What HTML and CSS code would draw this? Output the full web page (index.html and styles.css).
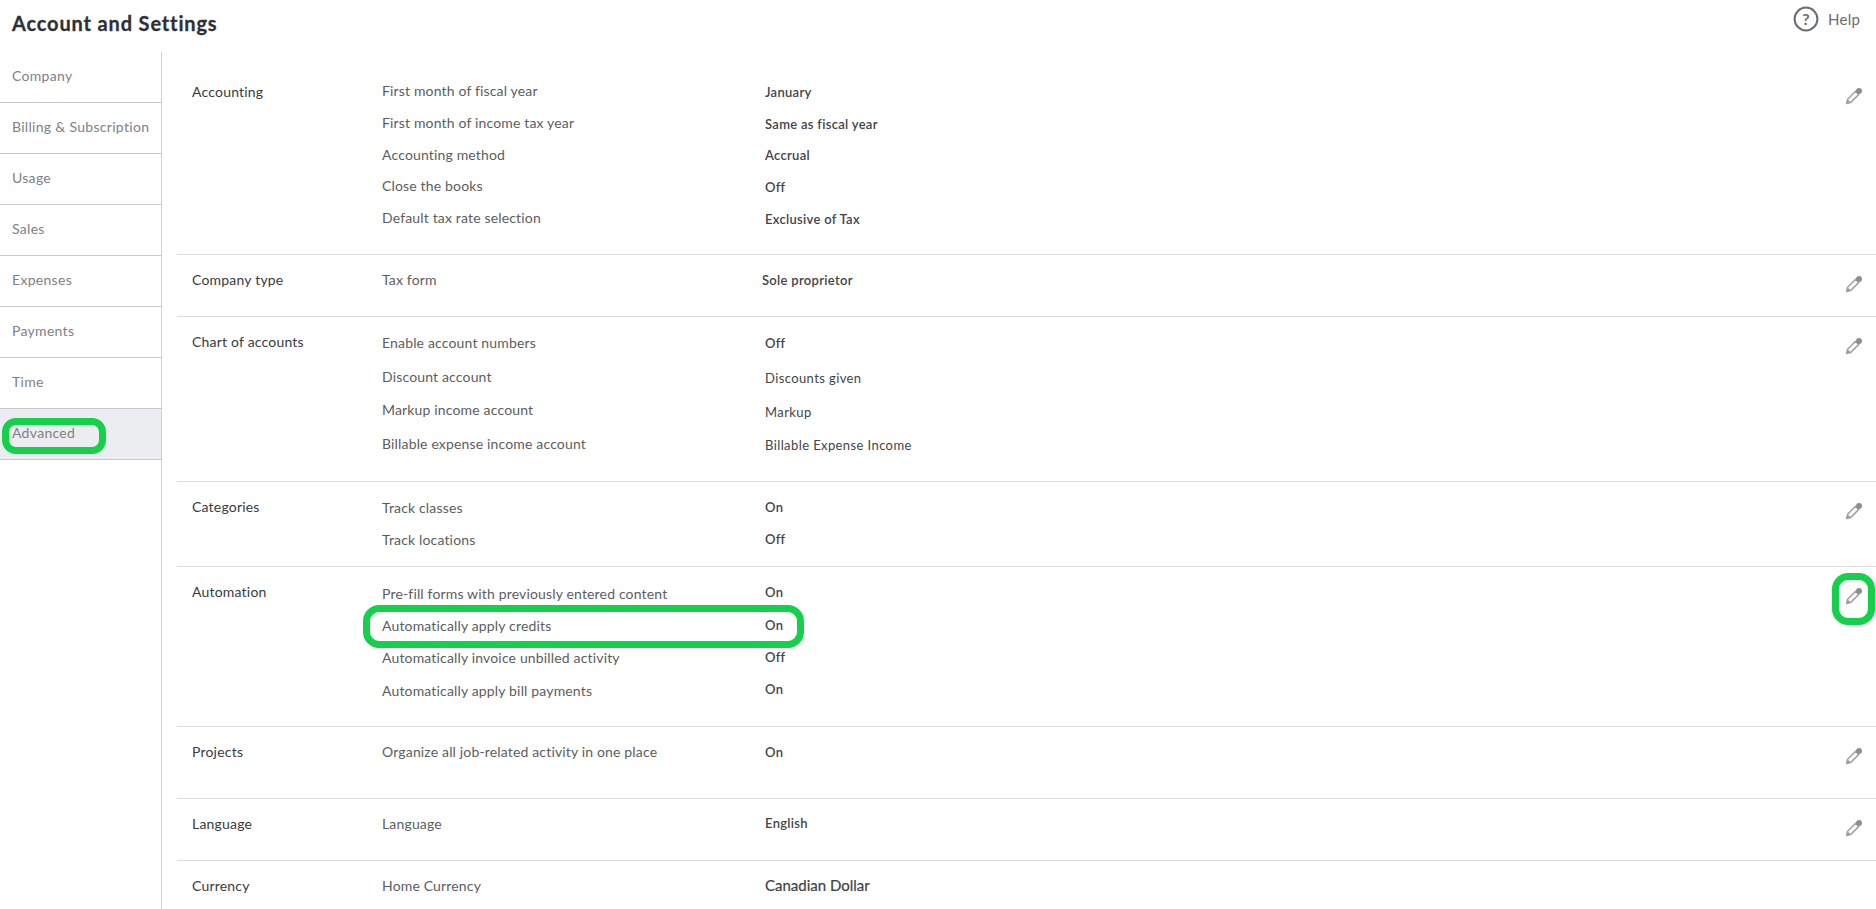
FILE: index.html
```html
<!DOCTYPE html>
<html lang="en">
<head>
<meta charset="utf-8">
<title>Account and Settings</title>
<link rel="stylesheet" href="styles.css">
</head>
<body>
<svg class="defs" width="0" height="0" aria-hidden="true">
  <symbol id="pencil" viewBox="0 0 18 18">
    <path d="M1.6 16.4l1-4.2L10.6 4.2l3.2 3.2L5.8 15.4z" fill="none" stroke="#a0a1a4" stroke-width="1.5" stroke-linejoin="round"/>
    <path d="M1.2 16.8l1.3-4.8 3.5 3.5z" fill="#a0a1a4"/>
    <circle cx="14" cy="4" r="3" fill="#8d8e91"/>
  </symbol>
</svg>
<header class="top">
  <h1 class="title">Account and Settings</h1>
  <div class="help">
    <svg class="help-icon" viewBox="0 0 26 26"><circle cx="13" cy="13" r="11.4" fill="none" stroke="#6b6c72" stroke-width="2"/><text x="13" y="18.5" text-anchor="middle" class="help-q">?</text></svg>
    <span>Help</span>
  </div>
</header>
<div class="layout">
  <nav class="side">
    <a class="side-item">Company</a>
    <a class="side-item">Billing &amp; Subscription</a>
    <a class="side-item">Usage</a>
    <a class="side-item">Sales</a>
    <a class="side-item">Expenses</a>
    <a class="side-item">Payments</a>
    <a class="side-item">Time</a>
    <a class="side-item is-active">Advanced</a>
  </nav>
  <main class="main">
    <section class="sec sec-accounting">
      <h2 class="sec-title">Accounting</h2>
      <div class="rows">
        <div class="row"><span class="label">First month of fiscal year</span><span class="val">January</span></div>
        <div class="row"><span class="label">First month of income tax year</span><span class="val">Same as fiscal year</span></div>
        <div class="row"><span class="label">Accounting method</span><span class="val">Accrual</span></div>
        <div class="row"><span class="label">Close the books</span><span class="val">Off</span></div>
        <div class="row"><span class="label">Default tax rate selection</span><span class="val">Exclusive of Tax</span></div>
      </div>
      <svg class="edit"><use href="#pencil"/></svg>
    </section>
    <section class="sec sec-type">
      <h2 class="sec-title">Company type</h2>
      <div class="rows">
        <div class="row"><span class="label">Tax form</span><span class="val val-shift">Sole proprietor</span></div>
      </div>
      <svg class="edit"><use href="#pencil"/></svg>
    </section>
    <section class="sec sec-chart">
      <h2 class="sec-title">Chart of accounts</h2>
      <div class="rows">
        <div class="row"><span class="label">Enable account numbers</span><span class="val">Off</span></div>
        <div class="row"><span class="label">Discount account</span><span class="val val-plain">Discounts given</span></div>
        <div class="row"><span class="label">Markup income account</span><span class="val val-plain">Markup</span></div>
        <div class="row"><span class="label">Billable expense income account</span><span class="val val-plain">Billable Expense Income</span></div>
      </div>
      <svg class="edit"><use href="#pencil"/></svg>
    </section>
    <section class="sec sec-cat">
      <h2 class="sec-title">Categories</h2>
      <div class="rows">
        <div class="row"><span class="label">Track classes</span><span class="val">On</span></div>
        <div class="row"><span class="label">Track locations</span><span class="val">Off</span></div>
      </div>
      <svg class="edit"><use href="#pencil"/></svg>
    </section>
    <section class="sec sec-auto">
      <h2 class="sec-title">Automation</h2>
      <div class="rows">
        <div class="row"><span class="label">Pre-fill forms with previously entered content</span><span class="val">On</span></div>
        <div class="row"><span class="label">Automatically apply credits</span><span class="val">On</span></div>
        <div class="row"><span class="label">Automatically invoice unbilled activity</span><span class="val">Off</span></div>
        <div class="row"><span class="label">Automatically apply bill payments</span><span class="val">On</span></div>
      </div>
      <svg class="edit"><use href="#pencil"/></svg>
    </section>
    <section class="sec sec-proj">
      <h2 class="sec-title">Projects</h2>
      <div class="rows">
        <div class="row"><span class="label">Organize all job-related activity in one place</span><span class="val">On</span></div>
      </div>
      <svg class="edit"><use href="#pencil"/></svg>
    </section>
    <section class="sec sec-lang">
      <h2 class="sec-title">Language</h2>
      <div class="rows">
        <div class="row"><span class="label">Language</span><span class="val">English</span></div>
      </div>
      <svg class="edit"><use href="#pencil"/></svg>
    </section>
    <section class="sec sec-cur">
      <h2 class="sec-title">Currency</h2>
      <div class="rows">
        <div class="row"><span class="label">Home Currency</span><span class="val val-large">Canadian Dollar</span></div>
      </div>
    </section>
  </main>
</div>
<div class="mark mark-nav"></div>
<div class="mark mark-row"></div>
<div class="mark mark-edit"></div>
</body>
</html>
```
FILE: styles.css
```css
* { box-sizing: border-box; }
html, body { height: 100%; }
body {
  margin: 0;
  height: 909px;
  overflow: hidden;
  background: #fff;
  color: #393a3d;
  font-family: "Lato", "Noto Sans", sans-serif;
  position: relative;
}
.defs { position: absolute; }
.top {
  height: 52px;
  display: flex;
  justify-content: space-between;
  align-items: flex-start;
  padding: 0 16px 0 12px;
}
.title {
  margin: 11px 0 0;
  font-size: 20px;
  line-height: 24px;
  font-weight: 700;
  letter-spacing: 0.85px;
  -webkit-text-stroke: 0.3px #2f3035;
  color: #2f3035;
}
.help {
  display: flex;
  align-items: center;
  gap: 9px;
  margin-top: 6px;
  font-size: 15px;
  letter-spacing: 0.2px;
  color: #6b6c72;
  line-height: 24px;
}
.help-icon { width: 26px; height: 26px; }
.help-q { font: 700 16px "Lato", sans-serif; fill: #6b6c72; }
.layout { display: flex; height: 857px; }
.side {
  width: 162px;
  flex: none;
  border-right: 1px solid #cfcfd1;
}
.side-item {
  display: block;
  height: 51px;
  padding: 14px 0 0 12px;
  font-size: 14px;
  line-height: 20px;
  letter-spacing: 0.3px;
  color: #808186;
  border-bottom: 1px solid #c9c9cb;
}
.is-active { background: #ecedf0; }
.main { flex: 1; min-width: 0; padding: 14px 0 0 15px; }
.sec {
  display: flex;
  align-items: flex-start;
  border-bottom: 1px solid #dcdcde;
  padding: 9px 0 0 15px;
  position: relative;
}
.sec-title {
  margin: 0;
  width: 190px;
  flex: none;
  height: 32px;
  font-size: 14px;
  line-height: 32px;
  font-weight: 400;
  letter-spacing: 0.2px;
  color: #393a3d;
}
.rows { flex: 1; margin-top: var(--shift, 0); }
.row { display: flex; height: var(--row, 32px); align-items: center; }
.label { width: 383px; flex: none; font-size: 14px; letter-spacing: 0.16px; color: #5c5d61; }
.val {
  font-size: 13px;
  font-weight: 600;
  letter-spacing: 0.3px;
  color: #434448;
  position: relative;
  top: var(--val, 0);
}
.val-plain { font-weight: 400; letter-spacing: 0.4px; top: 2px; }
.val-shift { margin-left: -3px; }
.val-large { font-size: 15px; font-weight: 400; letter-spacing: 0; -webkit-text-stroke: 0.2px #393a3d; }
.edit { width: 18px; height: 18px; flex: none; margin: 11px 13px 0 0; }
.sec-accounting { height: 189px; padding-top: 10px; --row: 31.7px; --shift: -1px; --val: 1px; }
.sec-type { height: 62px; --shift: -1px; --val: 1px; }
.sec-chart { height: 165px; --row: 33.5px; }
.sec-cat { height: 85px; }
.sec-auto { height: 160px; --row: 32.4px; --shift: 1px; --val: -1px; }
.sec-proj { height: 72px; --shift: -1px; --val: 1px; }
.sec-lang { height: 62px; --shift: -1px; }
.sec-cur { border-bottom: 0; --shift: -1px; }
.mark {
  position: absolute;
  border: 7px solid #14d04a;
  pointer-events: none;
}
.mark-nav { left: 2px; top: 418px; width: 104px; height: 36px; border-radius: 14px; }
.mark-row { left: 363px; top: 605px; width: 441px; height: 43px; border-radius: 16px; }
.mark-edit { left: 1832px; top: 573px; width: 43px; height: 52px; border-radius: 16px; }
```
